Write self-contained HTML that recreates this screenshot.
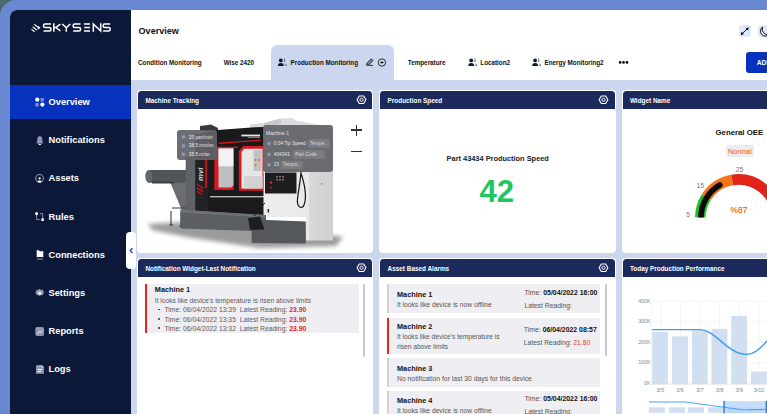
<!DOCTYPE html>
<html><head><meta charset="utf-8">
<style>
*{box-sizing:border-box;margin:0;padding:0}
html,body{width:767px;height:414px;overflow:hidden;background:#6a88d1}
body{font-family:"Liberation Sans",sans-serif;position:relative}
.a{position:absolute}
.t{position:absolute;white-space:nowrap}
#corner{left:0;top:0;width:30px;height:30px;background:#4b6a70}
#bgr{left:0;top:0;width:767px;height:414px;background:#6a88d1;border-top-left-radius:16px}
#app{left:10px;top:10px;width:757px;height:404px;background:#fff;border-top-left-radius:7px;overflow:hidden}
#side{left:10px;top:10px;width:121px;height:404px;background:#0b1838;border-top-left-radius:7px}
#content{left:131px;top:80px;width:636px;height:334px;background:#ccd7ef}
.menu{position:absolute;left:10px;width:121px;height:34px;color:#fff;font-weight:700;font-size:9.3px}
.menu .l{position:absolute;left:38.5px;top:0;line-height:34px;white-space:nowrap}
.menu svg{position:absolute;left:25px;top:12px}
.tab{position:absolute;font-weight:700;font-size:6.3px;color:#111;white-space:nowrap;line-height:10px}
.card{position:absolute;background:#fff;border-radius:4px;overflow:hidden}
.ch{position:absolute;left:1px;top:1px;right:1px;height:17.6px;background:#1c2a5b;color:#fff;font-weight:700;font-size:6.4px;line-height:19.2px;padding-left:7.3px;white-space:nowrap;border-radius:3.5px 3.5px 0 0}
.gear{position:absolute;right:7px;top:4px}
</style></head><body>
<div class="a" id="corner"></div>
<div class="a" id="bgr"></div>
<div class="a" id="app"></div>
<div class="a" id="side"></div>
<div class="a" id="content"></div>

<!-- logo -->
<svg class="a" style="left:30px;top:23px" width="12" height="10" viewBox="30 23 12 10">
  <path d="M33.5 24.3 L35.3 24.3 L39 27.6 L37.2 27.6Z" fill="#fff"/>
  <path d="M32 26.8 L33.8 26.8 L37.6 30.3 L35.8 30.3Z" fill="#fff"/>
  <path d="M30.7 29.3 L32.5 29.3 L35.3 31.8 L33.5 31.8Z" fill="#fff"/>
  <path d="M38.3 26 L40.6 27.8 L38.3 29.6 L37.4 28.7 L38.6 27.8 L37.4 26.9Z" fill="#fff"/>
</svg>
<svg class="a" style="left:0;top:0" width="131" height="40" viewBox="0 0 131 40"><path d="M50.975 24.025000000000002 L45.125 24.025000000000002 Q43.525 24.025000000000002 43.525 25.625000000000004 L43.525 25.9 Q43.525 27.5 45.125 27.5 L49.375 27.5 Q50.975 27.5 50.975 29.1 L50.975 29.374999999999996 Q50.975 30.974999999999998 49.375 30.974999999999998 L43.525 30.974999999999998 M53.825 23.3 L53.825 31.7 M53.825 27.5 L55.825 27.5 L60.375 24.025000000000002 M55.825 27.5 L60.375 30.974999999999998 M62.325 24.025000000000002 L66.30000000000001 27.8 L70.275 24.025000000000002 M66.30000000000001 27.8 L66.30000000000001 31.7 M80.575 24.025000000000002 L74.725 24.025000000000002 Q73.125 24.025000000000002 73.125 25.625000000000004 L73.125 25.9 Q73.125 27.5 74.725 27.5 L78.97500000000001 27.5 Q80.575 27.5 80.575 29.1 L80.575 29.374999999999996 Q80.575 30.974999999999998 78.97500000000001 30.974999999999998 L73.125 30.974999999999998 M83.925 24.025000000000002 L89.97500000000001 24.025000000000002 M84.225 27.5 L89.97500000000001 27.5 M83.925 30.974999999999998 L89.97500000000001 30.974999999999998 M93.32499999999999 31.7 L93.32499999999999 24.025000000000002 L100.67500000000001 30.974999999999998 L100.67500000000001 23.3 M110.17500000000001 24.025000000000002 L104.725 24.025000000000002 Q103.125 24.025000000000002 103.125 25.625000000000004 L103.125 25.9 Q103.125 27.5 104.725 27.5 L108.57500000000002 27.5 Q110.17500000000001 27.5 110.17500000000001 29.1 L110.17500000000001 29.374999999999996 Q110.17500000000001 30.974999999999998 108.57500000000002 30.974999999999998 L103.125 30.974999999999998" fill="none" stroke="#fff" stroke-width="1.55" stroke-linejoin="miter"/></svg>

<!-- menu -->
<div class="a" style="left:10px;top:85px;width:121px;height:34px;background:#0632bd"></div>
<div class="menu" style="top:85px"><span class="l">Overview</span></div>
<div class="menu" style="top:123px"><span class="l">Notifications</span></div>
<div class="menu" style="top:161px"><span class="l">Assets</span></div>
<div class="menu" style="top:200px"><span class="l">Rules</span></div>
<div class="menu" style="top:238px"><span class="l">Connections</span></div>
<div class="menu" style="top:276px"><span class="l">Settings</span></div>
<div class="menu" style="top:314px"><span class="l">Reports</span></div>
<div class="menu" style="top:352px"><span class="l">Logs</span></div>
<svg class="a" style="left:0;top:0" width="131" height="414" viewBox="0 0 131 414">
  <!-- overview -->
  <circle cx="37.3" cy="99.7" r="2.1" fill="#fff"/>
  <rect x="40.5" y="98" width="3.4" height="3.4" rx="0.6" fill="#fff" fill-opacity="0.45"/>
  <rect x="35.3" y="103" width="3.4" height="3.4" rx="0.6" fill="#fff" fill-opacity="0.45"/>
  <circle cx="42.4" cy="104.6" r="2.1" fill="#fff"/>
  <!-- bell -->
  <path d="M39.8 136.3 C37.8 136.3 37.2 138.2 37.2 140 L37 142.3 L36.4 143.4 L43.2 143.4 L42.6 142.3 L42.4 140 C42.4 138.2 41.8 136.3 39.8 136.3Z" fill="#8f97b2"/>
  <ellipse cx="39.8" cy="144.4" rx="1.3" ry="0.7" fill="#fff"/>
  <!-- assets -->
  <circle cx="39.6" cy="178.3" r="3.8" fill="none" stroke="#8f97b2" stroke-width="1.1"/>
  <circle cx="39.6" cy="178.3" r="1.1" fill="#fff"/>
  <path d="M37.8 182.6 Q37.8 180.2 39.6 180.2 Q41.4 180.2 41.4 182.6Z" fill="#fff"/>
  <!-- rules -->
  <rect x="35.3" y="212.3" width="2.6" height="2.6" rx="0.5" fill="#fff"/>
  <rect x="41.3" y="218.3" width="2.6" height="2.6" rx="0.5" fill="#fff"/>
  <path d="M36.6 215 L36.6 219.6 L39.8 219.6 M39.8 213.6 L42.6 213.6 L42.6 218" fill="none" stroke="#8f97b2" stroke-width="0.9"/>
  <!-- connections -->
  <path d="M36.7 250.2 L39 250.2 L39.8 251.2 L43.3 251.2 L43.3 257 L36.7 257Z" fill="#fff"/>
  <rect x="37" y="258.6" width="6" height="1" fill="#8f97b2"/>
  <!-- settings -->
  <path d="M39.7 288.7 l1.3 1.2 1.7 -0.4 0.5 1.7 1.2 1.2 -1.2 1.2 -0.5 1.7 -1.7 -0.4 -1.3 1.2 -1.3 -1.2 -1.7 0.4 -0.5 -1.7 -1.2 -1.2 1.2 -1.2 0.5 -1.7 1.7 0.4Z" fill="#8f97b2"/>
  <circle cx="39.7" cy="293.3" r="1.5" fill="#fff"/>
  <!-- reports -->
  <rect x="35.3" y="326.9" width="8.8" height="9" rx="2" fill="#8f97b2"/>
  <path d="M37.6 333.4 L39.6 331.6 L40.6 332.4 L42 330.6" fill="none" stroke="#fff" stroke-width="1"/>
  <!-- logs -->
  <path d="M37 364.9 L41.6 364.9 L43.9 367.3 L43.9 373.8 L36 373.8 L36 365.9Z" fill="#8f97b2"/>
  <path d="M41.6 364.9 L43.9 367.3 L41.6 367.3Z" fill="#fff"/>
  <rect x="37.6" y="369" width="4.6" height="0.9" fill="#fff"/>
  <rect x="37.6" y="371.2" width="3.4" height="0.9" fill="#fff"/>
</svg>

<!-- header -->
<div class="t" style="left:138.5px;top:26px;font-size:9.1px;font-weight:700;color:#111;line-height:11px">Overview</div>
<div class="tab" style="left:138px;top:57.5px">Condition Monitoring</div>
<div class="tab" style="left:223.7px;top:57.5px">Wise 2420</div>
<div class="a" style="left:271px;top:45px;width:123px;height:36px;background:#ccd7ef;border-radius:6px 6px 0 0"></div>
<div class="tab" style="left:290.5px;top:57.5px">Production Monitoring</div>
<div class="tab" style="left:407.8px;top:57.5px">Temperature</div>
<div class="tab" style="left:480.3px;top:57.5px">Location2</div>
<div class="tab" style="left:544.5px;top:57.5px">Energy Monitoring2</div>
<div class="a" style="left:746px;top:52px;width:40px;height:20.5px;background:#0632bd;border-radius:3px"></div>
<div class="t" style="left:756.7px;top:57.8px;font-size:6.6px;font-weight:700;color:#fff;line-height:10px">ADD</div>
<div class="a" style="left:738.5px;top:25px;width:12px;height:12px;background:#e0e8f7;border-radius:3px"></div>
<div class="a" style="left:758px;top:25px;width:12px;height:12px;background:#e0e8f7;border-radius:3px"></div>

<!-- header icons -->
<svg class="a" style="left:0;top:0" width="767" height="80" viewBox="0 0 767 80">
  <!-- users icon (active tab) -->
  <path d="M283.3 58.3 A2 2 0 0 1 283.3 62.3 A2.6 2.6 0 0 0 283.3 58.3Z" fill="#5b6584"/>
  <path d="M284.2 63.2 Q286.8 63.6 286.8 66 L285.4 66 Q285.4 64.2 284.2 63.2Z" fill="#5b6584"/>
  <circle cx="280.8" cy="60.4" r="1.9" fill="#0b1838"/>
  <path d="M277.9 66 Q277.9 63 280.8 63 Q283.8 63 283.8 66Z" fill="#0b1838"/>
  <!-- location2 icon -->
  <path d="M473.7 58.3 A2 2 0 0 1 473.7 62.3 A2.6 2.6 0 0 0 473.7 58.3Z" fill="#5b6584"/>
  <path d="M474.6 63.2 Q477.2 63.6 477.2 66 L475.8 66 Q475.8 64.2 474.6 63.2Z" fill="#5b6584"/>
  <circle cx="471.2" cy="60.4" r="1.9" fill="#0b1838"/>
  <path d="M468.3 66 Q468.3 63 471.2 63 Q474.2 63 474.2 66Z" fill="#0b1838"/>
  <!-- energy icon -->
  <path d="M537.6 58.3 A2 2 0 0 1 537.6 62.3 A2.6 2.6 0 0 0 537.6 58.3Z" fill="#5b6584"/>
  <path d="M538.5 63.2 Q541.1 63.6 541.1 66 L539.7 66 Q539.7 64.2 538.5 63.2Z" fill="#5b6584"/>
  <circle cx="535.1" cy="60.4" r="1.9" fill="#0b1838"/>
  <path d="M532.2 66 Q532.2 63 535.1 63 Q538.1 63 538.1 66Z" fill="#0b1838"/>
  <!-- pencil -->
  <path d="M366.6 65.3 L366.9 63.3 L371.3 58.9 L373 60.6 L368.6 65Z" fill="#8a93ad" stroke="#000" stroke-width="0.8" stroke-linejoin="round"/>
  <path d="M368.5 65.4 L373 65.4" stroke="#000" stroke-width="0.8"/>
  <!-- circle icon -->
  <circle cx="381.9" cy="62.5" r="3.7" fill="none" stroke="#000" stroke-width="0.8"/>
  <path d="M379.8 62.5 L381.9 61.6 L384 62.5 L381.9 63.4Z" fill="#000"/>
  <!-- dots -->
  <circle cx="620.1" cy="62.4" r="1.3" fill="#000"/>
  <circle cx="623.5" cy="62.4" r="1.3" fill="#000"/>
  <circle cx="627" cy="62.4" r="1.3" fill="#000"/>
  <!-- expand -->
  <path d="M741.3 34.4 L748.2 28" stroke="#000" stroke-width="0.9"/>
  <path d="M740.8 35 L741.4 31.8 L744 34.3Z M748.7 27.5 L745.6 28.2 L748 30.6Z" fill="#000"/>
  <!-- moon -->
  <path d="M762.6 27 A5 5 0 1 0 769 34.6 A5.6 5.6 0 0 1 762.6 27Z" fill="none" stroke="#000" stroke-width="0.9" stroke-linejoin="round"/>
</svg>
<!-- collapse btn -->
<div class="a" style="left:126.2px;top:231.6px;width:10px;height:37.5px;background:#fff;border-radius:4px"></div>
<svg class="a" style="left:126px;top:244px" width="10" height="12" viewBox="0 0 10 12"><path d="M6.4 4.2 L4.2 6.6 L6.4 9" fill="none" stroke="#0a36c4" stroke-width="1.25"/></svg>

<!-- cards -->
<div class="card" style="left:137.1px;top:90.1px;width:236.4px;height:162.9px"><div class="ch">Machine Tracking</div></div>
<div class="card" style="left:379.3px;top:90.1px;width:236.4px;height:162.9px"><div class="ch">Production Speed</div></div>
<div class="card" style="left:621.6px;top:90.1px;width:236.4px;height:162.9px"><div class="ch">Widget Name</div></div>
<div class="card" style="left:137.1px;top:258.2px;width:236.4px;height:170px"><div class="ch">Notification Widget-Last Notification</div></div>
<div class="card" style="left:379.3px;top:258.2px;width:236.4px;height:170px"><div class="ch">Asset Based Alarms</div></div>
<div class="card" style="left:621.6px;top:258.2px;width:236.4px;height:170px"><div class="ch">Today Production Performance</div></div>

<!-- machine tracking -->
<svg class="a" style="left:139px;top:109px" width="233" height="143" viewBox="139 109 233 143">
  <defs>
    <linearGradient id="shd" x1="0" y1="0" x2="0" y2="1">
      <stop offset="0" stop-color="#6e6e6e" stop-opacity="0.75"/>
      <stop offset="1" stop-color="#fff" stop-opacity="0"/>
    </linearGradient>
    <linearGradient id="cab" x1="0" y1="0" x2="1" y2="0">
      <stop offset="0" stop-color="#eeeeee"/>
      <stop offset="0.65" stop-color="#e9e9e9"/>
      <stop offset="0.66" stop-color="#d9d9d9"/>
      <stop offset="1" stop-color="#d0d0d0"/>
    </linearGradient>
    <filter id="blr" x="-20%" y="-50%" width="140%" height="200%"><feGaussianBlur stdDeviation="2"/></filter>
  </defs>
  <!-- shadow -->
  <path d="M148 224 L186 222 L306 231 L343 237 L336 246 L260 248 L186 237 L152 230Z" fill="#7a7a7a" fill-opacity="0.75" filter="url(#blr)"/>
  <!-- roof pieces -->
  <path d="M250 124.5 L264 123 L281 118.5 L292 118 L296 120.5 L322 125.5 L322 129 L250 129Z" fill="#dcdcdc"/><path d="M264 123 L281 118.5 L281 124 L264 126Z" fill="#c8c8c8"/>
  <path d="M200 126 L211 124.5 L218 128 L218 131 L200 131Z" fill="#3a3a3c"/>
  <!-- conveyor strut -->
  <path d="M170.4 182.7 L185.7 177.7 L194 211.5 L182.3 211.5Z" fill="#6a6e73"/>
  <path d="M172 208 L186 208" stroke="#3a3a3a" stroke-width="1"/>
  <g stroke="#2a2a2a" stroke-width="1">
    <path d="M171 211 L171 225"/><path d="M181 211 L181 226"/><path d="M169.5 225 L173 225"/><path d="M179.5 226.2 L183 226.2"/>
  </g>
  <!-- conveyor -->
  <path d="M149 170 L188 170 L188 182.7 L149 182.7 A3.6 6.35 0 0 1 149 170Z" fill="#50555a"/>
  <ellipse cx="149" cy="176.35" rx="3.3" ry="6.35" fill="#62676c"/>
  <rect x="152" y="181.7" width="22" height="1.8" fill="#393c40"/>
  <!-- column -->
  <path d="M185.7 157 L196 156 L196 211.5 L185.7 211.5Z" fill="#5f6368"/>
  <!-- black main body -->
  <path d="M195.5 135 L218 129.9 L254.7 127.2 L264 127 L266 217 L195.5 212Z" fill="#1a1a1c"/>
  <path d="M195.5 135 L208 132 L208 213 L195.5 212Z" fill="#222225"/>
  <rect x="205.3" y="150" width="1.8" height="38" fill="#c4161c"/>
  <!-- mv logo -->
  <text x="0" y="0" transform="translate(202.6,181) rotate(-90)" font-family="Liberation Sans" font-style="italic" font-weight="700" font-size="7.8" fill="#d8d8d8">mvi</text>
  <path d="M197 183.5 L203.3 187.5 L203.3 189.3 L197 185.3Z M197 187 L203.3 191 L203.3 192.8 L197 188.8Z M197 190.5 L203.3 194.5 L201 194.5 L197 192.2Z" fill="#c4161c"/>
  <!-- logo/red swoosh -->
  <rect x="241.4" y="134.6" width="18.6" height="1.8" fill="#e6e6e6"/>
  <rect x="248" y="137" width="12" height="0.8" fill="#999"/>
  <path d="M218.5 142.6 L260.8 139.6 L260.8 140.8 L218.5 144Z" fill="#d0161c"/>
  <!-- left door -->
  <path d="M214.3 146.8 L238 146.8 L238 186 L234 190 L214.3 190Z" fill="#d8191f"/>
  <path d="M218.5 148.5 L233.7 148.5 L233.7 185.5 L231 187.4 L218.5 187.4Z" fill="#bfbfbf"/>
  <path d="M218.5 148.5 L233.7 148.5 L233.7 166.3 L218.5 166.3Z" fill="#f2f2f2"/>
  <rect x="233.7" y="148" width="5" height="42" fill="#1a1a1c"/>
  <!-- right door -->
  <path d="M243 146 L263.3 146 L263.3 190.8 L238.8 190.8 L238.8 151Z" fill="#d8191f"/>
  <path d="M244 148.8 L262.5 148.8 L262.5 188.5 L241.5 188.5 L241.5 152Z" fill="#e6e6e6"/>
  <path d="M253.5 150 L261.5 150 L261.5 171 L253.5 171Z" fill="#c2c2c2"/>
  <circle cx="255.5" cy="160" r="1" fill="#e2672a"/><circle cx="259" cy="160" r="1" fill="#e2672a"/>
  <circle cx="255.5" cy="165" r="1" fill="#e2672a"/>
  <path d="M244 176 L262.5 176 L262.5 188.5 L244 188.5Z" fill="#d2d2d2"/>
  <!-- lower strip -->
  <rect x="210" y="196.2" width="54" height="1.1" fill="#e0e0e0"/>
  <!-- white cabinet -->
  <path d="M263.5 171 L333 171 L333 240.5 L305.8 240.5 L305.8 217 L263.5 217Z" fill="url(#cab)"/>
  <rect x="263.5" y="129" width="46" height="44" fill="#e4e4e4"/>
  <rect x="309.5" y="129" width="23.5" height="44" fill="#d6d6d6"/>
  <rect x="321" y="183" width="1.2" height="1.8" fill="#888"/>
  <!-- control panel -->
  <path d="M265 172.5 L296.5 172.5 L296.5 193.5 L265 193.5Z" fill="#1d1d1f"/>
  <circle cx="271" cy="182.5" r="1.3" fill="#e2231a"/>
  <circle cx="271" cy="187.5" r="1" fill="#c4161c"/>
  <g fill="#777"><rect x="276" y="176" width="2" height="1.5"/><rect x="279" y="176" width="2" height="1.5"/><rect x="282" y="176" width="2" height="1.5"/><rect x="276" y="179" width="2" height="1.5"/><rect x="279" y="179" width="2" height="1.5"/><rect x="282" y="179" width="2" height="1.5"/></g>
  <!-- cable -->
  <path d="M300.6 172 C305 185 307 197 304 205 C302 210 296.5 207 297.5 199 C298.5 190 300.5 180 300.8 174" fill="none" stroke="#141414" stroke-width="1.2"/>
  <rect x="267.6" y="209" width="1.5" height="3.5" fill="#222"/>
  <!-- base -->
  <path d="M180.6 209.8 L266 215 L266 221.6 L251.6 221 L251.6 231 L180.6 228.4Z" fill="#5b5f64"/>
  <path d="M180.6 209.8 L266 215 L266 217.5 L180.6 212.5Z" fill="#6e7378"/>
  <path d="M251.6 219.5 L305.8 221.6 L305.8 243.6 L251.6 243Z" fill="#54585d"/>
  <!-- black box on base -->
  <path d="M248 218 L260 216.6 L264.5 229.5 L250 230Z" fill="#1d1d1f"/>
  <path d="M254 216 L262 206 L265 203" stroke="#1a1a1a" stroke-width="1"/>
</svg>
<!-- zoom controls -->
<div class="a" style="left:347px;top:121.5px;width:18px;height:17px;background:#fff;border-radius:2px;box-shadow:0 0 1px rgba(0,0,0,0.06)"></div>
<div class="a" style="left:347px;top:143px;width:18px;height:17px;background:#fff;border-radius:2px;box-shadow:0 0 1px rgba(0,0,0,0.06)"></div>
<div class="a" style="left:350.7px;top:129.4px;width:11px;height:1.2px;background:#333"></div>
<div class="a" style="left:355.6px;top:124.5px;width:1.2px;height:11px;background:#333"></div>
<div class="a" style="left:350.7px;top:151px;width:11px;height:1.2px;background:#333"></div>
<!-- tooltip 1 -->
<div class="a" style="left:177.3px;top:130.3px;width:39.5px;height:30px;background:rgba(98,99,104,0.93);border-radius:3px"></div>
<div class="a" style="left:262.8px;top:125.1px;width:70.1px;height:46.5px;background:rgba(98,99,104,0.93);border-radius:3px"></div>
<svg class="a" style="left:170px;top:120px" width="170" height="55" viewBox="170 120 170 55">
  <g fill="#8f99b6">
    <circle cx="183.4" cy="137" r="1.8"/><circle cx="183.4" cy="145.9" r="1.8"/><circle cx="183.4" cy="154.3" r="1.8"/>
    <circle cx="269" cy="143.6" r="1.8"/><circle cx="269" cy="154.4" r="1.8"/><circle cx="269" cy="164.7" r="1.8"/>
  </g>
  <g fill="#7b7c81" stroke="#85868b" stroke-width="0.4">
    <rect x="308" y="139.6" width="21.5" height="8.2" rx="1.5"/>
    <rect x="293.3" y="150.3" width="31.4" height="8.1" rx="1.5"/>
    <rect x="281.1" y="161" width="21.4" height="7.7" rx="1.5"/>
  </g>
</svg>
<div class="t" style="left:188.8px;top:133.5px;font-size:4.75px;color:#e4e4e4;line-height:7px">35 part/min</div>
<div class="t" style="left:188.8px;top:142.4px;font-size:4.75px;color:#e4e4e4;line-height:7px">38.5 mm/sn</div>
<div class="t" style="left:188.8px;top:150.8px;font-size:4.75px;color:#e4e4e4;line-height:7px">35.5 m/sn</div>
<div class="t" style="left:266px;top:129.6px;font-size:5px;color:#e4e4e4;line-height:7px">Machine 1</div>
<div class="t" style="left:273.8px;top:140.1px;font-size:4.76px;color:#e4e4e4;line-height:7px">0.04 Tip Speed</div>
<div class="t" style="left:310px;top:140.1px;font-size:4.76px;color:#d8d8d8;line-height:7px">Tempe..</div>
<div class="t" style="left:273.8px;top:150.9px;font-size:4.76px;color:#e4e4e4;line-height:7px">404343</div>
<div class="t" style="left:295.3px;top:150.9px;font-size:4.76px;color:#d8d8d8;line-height:7px">Part Code</div>
<div class="t" style="left:273.8px;top:161.2px;font-size:4.76px;color:#e4e4e4;line-height:7px">15</div>
<div class="t" style="left:283.1px;top:161.2px;font-size:4.76px;color:#d8d8d8;line-height:7px">Tempo..</div>
<!-- gears -->
<svg class="a" style="left:0;top:0" width="767" height="414" viewBox="0 0 767 414"><polygon points="365.90,99.80 363.70,103.53 359.30,103.53 357.10,99.80 359.30,96.07 363.70,96.07" fill="none" stroke="#fff" stroke-width="1.1" stroke-linejoin="round"/><circle cx="361.5" cy="99.8" r="1.6" fill="none" stroke="#fff" stroke-width="1"/><polygon points="607.90,99.80 605.70,103.53 601.30,103.53 599.10,99.80 601.30,96.07 605.70,96.07" fill="none" stroke="#fff" stroke-width="1.1" stroke-linejoin="round"/><circle cx="603.5" cy="99.8" r="1.6" fill="none" stroke="#fff" stroke-width="1"/><polygon points="365.90,267.80 363.70,271.53 359.30,271.53 357.10,267.80 359.30,264.07 363.70,264.07" fill="none" stroke="#fff" stroke-width="1.1" stroke-linejoin="round"/><circle cx="361.5" cy="267.8" r="1.6" fill="none" stroke="#fff" stroke-width="1"/><polygon points="607.90,267.80 605.70,271.53 601.30,271.53 599.10,267.80 601.30,264.07 605.70,264.07" fill="none" stroke="#fff" stroke-width="1.1" stroke-linejoin="round"/><circle cx="603.5" cy="267.8" r="1.6" fill="none" stroke="#fff" stroke-width="1"/></svg>
<!-- production speed -->
<div class="t" style="left:446.6px;top:153.8px;font-size:7.4px;font-weight:700;color:#222;line-height:10px">Part 43434 Production Speed</div>
<div class="t" style="left:479.5px;top:175px;font-size:31px;font-weight:700;color:#22c55e;line-height:34px">42</div>

<!-- gauge -->
<div class="t" style="left:715.5px;top:127px;font-size:7.8px;font-weight:700;color:#111;line-height:11px">General OEE</div>
<div class="a" style="left:726px;top:145.2px;width:27.6px;height:12.3px;background:#ececec;border-radius:1px"></div>
<div class="t" style="left:728px;top:146.5px;font-size:7.3px;color:#f25a12;line-height:10px">Normal</div>
<svg class="a" style="left:622px;top:150px" width="145" height="80" viewBox="622 150 145 80">
  <path d="M700.3 217.6 A38.2 38.2 0 0 1 706.3 197.1" fill="none" stroke="#1fc01f" stroke-width="10.6"/>
  <path d="M706.3 197.1 A38.2 38.2 0 0 1 732.2 180" fill="none" stroke="#f57418" stroke-width="10.6"/>
  <path d="M732.2 180 A38.2 38.2 0 0 1 776.7 217.6" fill="none" stroke="#e2231a" stroke-width="10.6"/>
  <path d="M700.9 217.6 A37.6 37.6 0 0 1 719.8 185" fill="none" stroke="#0a0a0a" stroke-width="5.6" stroke-linecap="round"/>
  <rect x="695" y="217.6" width="15" height="4" fill="#fff"/>
</svg>
<div class="t" style="left:735.7px;top:165.5px;font-size:6.8px;color:#777;line-height:8px">25</div>
<div class="t" style="left:696.5px;top:181.5px;font-size:6.8px;color:#777;line-height:8px">15</div>
<div class="t" style="left:686.3px;top:210.5px;font-size:6.8px;color:#777;line-height:8px">5</div>
<div class="t" style="left:730.6px;top:204.5px;font-size:8.4px;color:#f25a12;line-height:11px;-webkit-text-stroke:0.15px #f25a12">%87</div>

<!-- notification widget -->
<div class="a" style="left:145px;top:284px;width:214px;height:49.2px;background:#efeff3"></div>
<div class="a" style="left:145px;top:284px;width:2.2px;height:49.2px;background:#e3261b"></div>
<div class="t" style="left:154.8px;top:285.1px;font-size:7.3px;font-weight:700;color:#111;line-height:9px">Machine 1</div>
<div class="t" style="left:154.8px;top:296.1px;font-size:6.67px;color:#5c5c5c;line-height:9px">It looks like device's temperature is risen above limits</div>
<div class="a" style="left:158.2px;top:308.8px;width:1.6px;height:1.6px;border-radius:1px;background:#333"></div>
<div class="a" style="left:158.2px;top:318.3px;width:1.6px;height:1.6px;border-radius:1px;background:#333"></div>
<div class="a" style="left:158.2px;top:327.4px;width:1.6px;height:1.6px;border-radius:1px;background:#333"></div>
<div class="t" style="left:164.4px;top:305px;font-size:6.8px;color:#5c5c5c;line-height:9px">Time: 06/04/2022 13:39&nbsp; Latest Reading: <b style="color:#e3261b">23.90</b></div>
<div class="t" style="left:164.4px;top:314.5px;font-size:6.8px;color:#5c5c5c;line-height:9px">Time: 06/04/2022 13:35&nbsp; Latest Reading: <b style="color:#e3261b">23.90</b></div>
<div class="t" style="left:164.4px;top:323.6px;font-size:6.8px;color:#5c5c5c;line-height:9px">Time: 06/04/2022 13:32&nbsp; Latest Reading: <b style="color:#e3261b">23.90</b></div>
<div class="a" style="left:362.6px;top:283.7px;width:2.7px;height:73.3px;background:#c9c9cc;border-radius:1.5px"></div>

<!-- asset alarms -->
<div class="a" style="left:387.4px;top:284.2px;width:212.9px;height:28.8px;background:#efeff3"></div>
<div class="a" style="left:387.4px;top:284.2px;width:1.4px;height:28.8px;background:#d2d2d6"></div>
<div class="t" style="left:397px;top:289.6px;font-size:7.3px;font-weight:700;color:#111;line-height:9px">Machine 1</div>
<div class="t" style="left:397px;top:300.1px;font-size:6.7px;color:#555;line-height:9px">It looks like device is now offline</div>
<div class="t" style="left:524.4px;top:288.1px;font-size:6.9px;color:#555;line-height:9px">Time: <b style="color:#111">05/04/2022 16:00</b></div>
<div class="t" style="left:524.4px;top:301px;font-size:6.8px;color:#555;line-height:9px">Latest Reading:</div>

<div class="a" style="left:387.4px;top:317.5px;width:212.9px;height:36.3px;background:#efeff3"></div>
<div class="a" style="left:387.4px;top:317.5px;width:2px;height:36.3px;background:#e3261b"></div>
<div class="t" style="left:397px;top:322px;font-size:7.3px;font-weight:700;color:#111;line-height:9px">Machine 2</div>
<div class="t" style="left:397px;top:331.9px;font-size:6.64px;color:#555;line-height:9px">It looks like device's temperature is</div>
<div class="t" style="left:397px;top:341.5px;font-size:6.64px;color:#555;line-height:9px">risen above limits</div>
<div class="t" style="left:523.8px;top:325px;font-size:6.9px;color:#555;line-height:9px">Time: <b style="color:#111">06/04/2022 08:57</b></div>
<div class="t" style="left:523.8px;top:337.9px;font-size:6.8px;color:#555;line-height:9px">Latest Reading: <span style="color:#ea3a16">21.80</span></div>

<div class="a" style="left:387.4px;top:358.1px;width:212.9px;height:28.5px;background:#efeff3"></div>
<div class="a" style="left:387.4px;top:358.1px;width:1.4px;height:28.5px;background:#d2d2d6"></div>
<div class="t" style="left:397px;top:363.5px;font-size:7.3px;font-weight:700;color:#111;line-height:9px">Machine 3</div>
<div class="t" style="left:397px;top:374px;font-size:6.8px;color:#555;line-height:9px">No notification for last 30 days for this device</div>

<div class="a" style="left:387.4px;top:391px;width:212.9px;height:30px;background:#efeff3"></div>
<div class="a" style="left:387.4px;top:391px;width:1.4px;height:30px;background:#d2d2d6"></div>
<div class="t" style="left:397px;top:395.9px;font-size:7.3px;font-weight:700;color:#111;line-height:9px">Machine 4</div>
<div class="t" style="left:397px;top:406.4px;font-size:6.7px;color:#555;line-height:9px">It looks like device is now offline</div>
<div class="t" style="left:524.4px;top:394.4px;font-size:6.9px;color:#555;line-height:9px">Time: <b style="color:#111">05/04/2022 16:00</b></div>
<div class="t" style="left:524.4px;top:407px;font-size:6.8px;color:#555;line-height:9px">Latest Reading:</div>
<div class="a" style="left:604.8px;top:284.2px;width:2.7px;height:72.3px;background:#c9c9cc;border-radius:1.5px"></div>

<!-- chart -->
<svg class="a" style="left:622px;top:280px" width="145" height="134" viewBox="622 280 145 134">
  <g stroke="#ececec" stroke-width="0.6">
    <line x1="651.4" y1="301.1" x2="767" y2="301.1"/>
    <line x1="651.4" y1="321.8" x2="767" y2="321.8"/>
    <line x1="651.4" y1="342.3" x2="767" y2="342.3"/>
    <line x1="651.4" y1="362.9" x2="767" y2="362.9"/>
    <line x1="651.4" y1="383.6" x2="767" y2="383.6"/>
    <line x1="651.4" y1="301.1" x2="651.4" y2="383.6"/>
    <line x1="661" y1="301.1" x2="661" y2="383.6"/>
    <line x1="680.6" y1="301.1" x2="680.6" y2="383.6"/>
    <line x1="700.2" y1="301.1" x2="700.2" y2="383.6"/>
    <line x1="719.6" y1="301.1" x2="719.6" y2="383.6"/>
    <line x1="739.2" y1="301.1" x2="739.2" y2="383.6"/>
    <line x1="758.8" y1="301.1" x2="758.8" y2="383.6"/>
  </g>
  <g fill="#d1dff0">
    <rect x="652.2" y="331.9" width="15.8" height="52.4"/>
    <rect x="672.1" y="336.4" width="15.8" height="47.9"/>
    <rect x="691.9" y="330.4" width="15.8" height="53.9"/>
    <rect x="711.5" y="328.9" width="15.8" height="55.4"/>
    <rect x="731.3" y="316" width="15.8" height="68.3"/>
    <rect x="751" y="371.5" width="15.8" height="12.8"/>
  </g>
  <path d="M652 329.6 L700 329.6 C715 329.6 728 354.4 746 354.4 C756 354.4 762 346 768 340" fill="none" stroke="#3b9ded" stroke-width="1.4"/>
  <line x1="651.4" y1="384.3" x2="767" y2="384.3" stroke="#e3e3e3" stroke-width="0.6"/>
</g>
  <!-- brush -->
  <rect x="649" y="401.5" width="118" height="11.5" fill="#fff" stroke="#eef2f8" stroke-width="0.5"/>
  <g fill="#d1dff0">
    <rect x="649" y="407.3" width="15.8" height="5.5"/>
    <rect x="669" y="407.3" width="15.8" height="5.5"/>
    <rect x="688" y="407.3" width="15.8" height="5.5"/>
    <rect x="708" y="407.3" width="15.8" height="5.5"/>
    <rect x="727.7" y="407.3" width="15.8" height="5.5"/>
    <rect x="747.6" y="407.3" width="16.4" height="5.5"/>
  </g>
  <rect x="723.6" y="401.2" width="42.5" height="11.9" fill="#b3d1f7" fill-opacity="0.75"/>
  <path d="M649 402 L685.5 402 L724.4 407.3 L742.6 409.8 L764 409.5 L767 409" fill="none" stroke="#3a9ae8" stroke-width="0.9"/>
  <rect x="723.4" y="401" width="1.4" height="12.2" fill="#1e7fe0"/>
  <rect x="765.6" y="401" width="1.4" height="12.2" fill="#1e7fe0"/>
</svg>
<div class="t" style="right:116.5px;top:297.5px;font-size:5.3px;color:#888;line-height:7px">400K</div>
<div class="t" style="right:116.5px;top:318.2px;font-size:5.3px;color:#888;line-height:7px">300K</div>
<div class="t" style="right:116.5px;top:338.7px;font-size:5.3px;color:#888;line-height:7px">200K</div>
<div class="t" style="right:116.5px;top:359.3px;font-size:5.3px;color:#888;line-height:7px">100K</div>
<div class="t" style="right:116.5px;top:380.0px;font-size:5.3px;color:#888;line-height:7px">0K</div>
<div class="t" style="left:645.4px;width:30px;text-align:center;top:387.2px;font-size:5.5px;color:#888;line-height:7px">3/5</div>
<div class="t" style="left:665.1px;width:30px;text-align:center;top:387.2px;font-size:5.5px;color:#888;line-height:7px">3/6</div>
<div class="t" style="left:685px;width:30px;text-align:center;top:387.2px;font-size:5.5px;color:#888;line-height:7px">3/7</div>
<div class="t" style="left:704.7px;width:30px;text-align:center;top:387.2px;font-size:5.5px;color:#888;line-height:7px">3/8</div>
<div class="t" style="left:724.3px;width:30px;text-align:center;top:387.2px;font-size:5.5px;color:#888;line-height:7px">3/9</div>
<div class="t" style="left:744px;width:30px;text-align:center;top:387.2px;font-size:5.5px;color:#888;line-height:7px">3/10</div>
</body></html>
